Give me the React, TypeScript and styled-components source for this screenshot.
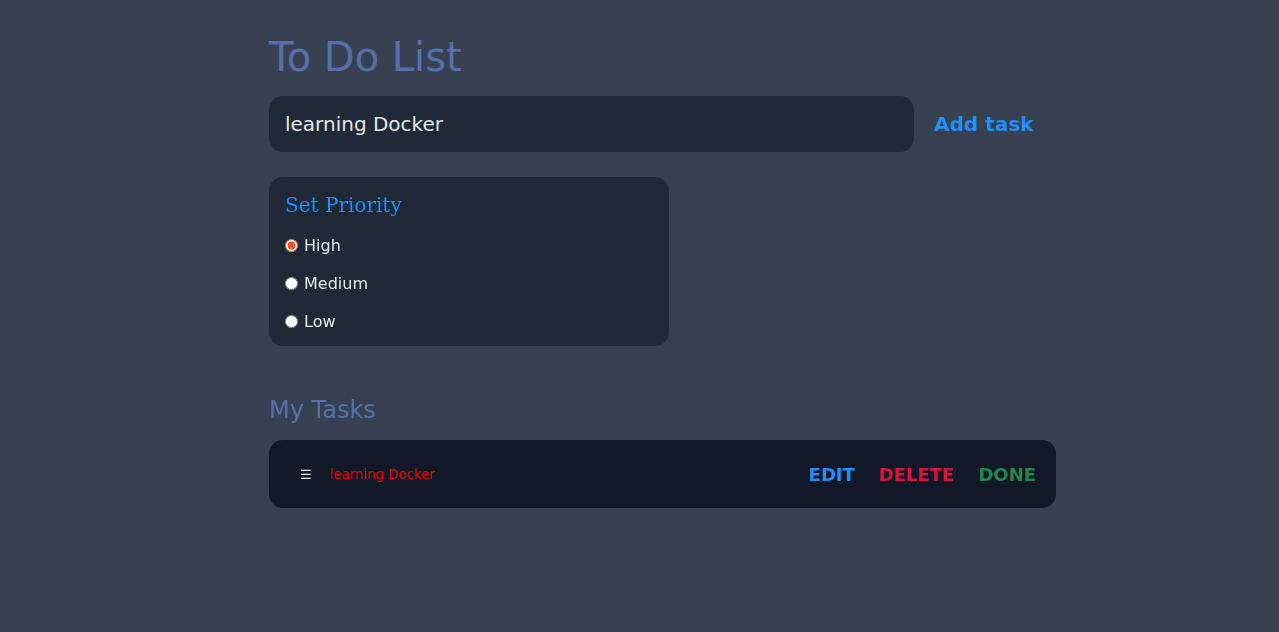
import React, { useState } from "react";
import styled, { createGlobalStyle } from "styled-components";

const Global = createGlobalStyle`
  html, body { margin: 0; padding: 0; background: #374151; }
  body { font-family: "DejaVu Sans", sans-serif; }
  * { box-sizing: border-box; }
`;

const Page = styled.div`
  min-height: 632px;
  background: #374151;
  padding: 34px 0 0 269px;
`;

const Container = styled.div`
  width: 787px;
  display: flex;
  flex-direction: column;
`;

const Title = styled.h1`
  margin: 0;
  font-family: "DejaVu Sans", sans-serif;
  font-weight: 400;
  font-size: 40px;
  line-height: 47px;
  color: #5571ab;
`;

const InputRow = styled.div`
  display: flex;
  align-items: center;
  margin-top: 15px;
`;

const TaskInput = styled.input`
  width: 645px;
  height: 56px;
  border: none;
  outline: none;
  border-radius: 14px;
  background: #1f2937;
  color: #e5e7eb;
  padding: 0 16px;
  font-family: "DejaVu Sans", sans-serif;
  font-size: 20px;
  caret-color: #e5e7eb;
`;

const AddButton = styled.button`
  background: none;
  border: none;
  padding: 0 0 0 20px;
  color: #1e90ff;
  font-family: "DejaVu Sans", sans-serif;
  font-weight: 700;
  font-size: 20px;
  cursor: pointer;
`;

const PriorityBox = styled.fieldset`
  margin: 25px 0 0 0;
  width: 400px;
  border: none;
  border-radius: 14px;
  background: #1f2937;
  padding: 17px 16px 6px;
  display: flex;
  flex-direction: column;
`;

const PriorityTitle = styled.div`
  font-family: "DejaVu Serif", serif;
  font-size: 20px;
  line-height: 23px;
  color: #1e90ff;
  margin-bottom: 9px;
`;

const RadioRow = styled.label`
  display: flex;
  align-items: center;
  height: 38px;
  gap: 6px;
  color: #e5e7eb;
  font-family: "DejaVu Sans", sans-serif;
  font-size: 16px;
  cursor: pointer;
`;

const Radio = styled.input`
  margin: 0;
  width: 13px;
  height: 13px;
  accent-color: #e4572e;
`;

const SectionTitle = styled.h2`
  margin: 50px 0 0 0;
  font-family: "DejaVu Sans", sans-serif;
  font-weight: 400;
  font-size: 24px;
  line-height: 28px;
  color: #5571ab;
`;

const TaskCard = styled.div`
  margin-top: 16px;
  height: 68px;
  border-radius: 14px;
  background: #111827;
  display: flex;
  align-items: center;
  padding: 0 20px 0 31px;
`;

const Handle = styled.span`
  color: #e5e7eb;
  font-size: 13px;
  width: 30px;
`;

const TaskText = styled.span<{ $color: string }>`
  flex: 1;
  color: ${(p) => p.$color};
  font-family: "DejaVu Sans", sans-serif;
  font-size: 13.3px;
`;

const Actions = styled.div`
  display: flex;
  gap: 24px;
`;

const ActionButton = styled.button<{ $color: string }>`
  background: none;
  border: none;
  padding: 0;
  color: ${(p) => p.$color};
  font-family: "DejaVu Sans", sans-serif;
  font-weight: 700;
  font-size: 18px;
  cursor: pointer;
`;

export default function App() {
  const [text, setText] = useState("learning Docker");
  const [priority, setPriority] = useState("High");
  return (
    <>
      <Global />
      <Page>
        <Container>
          <Title>To Do List</Title>
          <InputRow>
            <TaskInput autoFocus value={text} onChange={(e) => setText(e.target.value)} />
            <AddButton>Add task</AddButton>
          </InputRow>
          <PriorityBox>
            <PriorityTitle>Set Priority</PriorityTitle>
            {["High", "Medium", "Low"].map((p) => (
              <RadioRow key={p}>
                <Radio
                  type="radio"
                  name="priority"
                  checked={priority === p}
                  onChange={() => setPriority(p)}
                />
                {p}
              </RadioRow>
            ))}
          </PriorityBox>
          <SectionTitle>My Tasks</SectionTitle>
          <TaskCard>
            <Handle>☰</Handle>
            <TaskText $color="#ff0000">learning Docker</TaskText>
            <Actions>
              <ActionButton $color="#1e90ff">EDIT</ActionButton>
              <ActionButton $color="#dc143c">DELETE</ActionButton>
              <ActionButton $color="#1f8a4c">DONE</ActionButton>
            </Actions>
          </TaskCard>
        </Container>
      </Page>
    </>
  );
}
